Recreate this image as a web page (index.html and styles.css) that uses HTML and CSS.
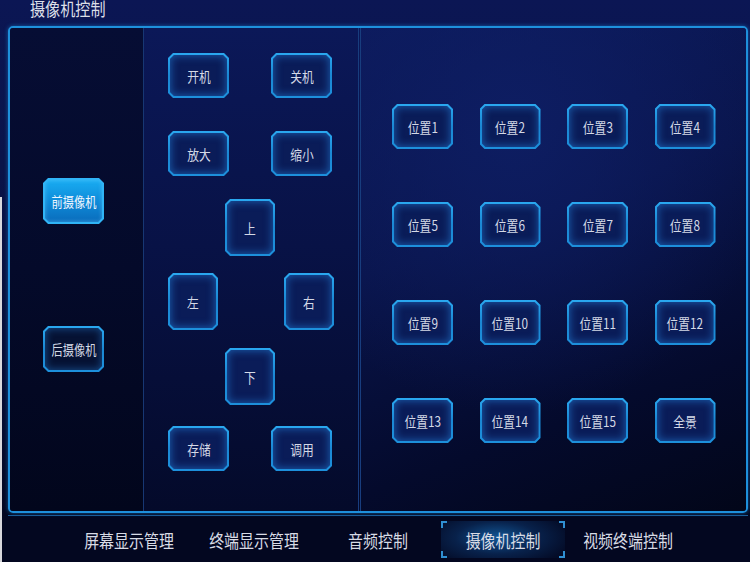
FILE: index.html
```html
<!DOCTYPE html>
<html lang="zh-CN">
<head>
<meta charset="utf-8">
<title>摄像机控制</title>
<link rel="stylesheet" href="styles.css">
</head>
<body>
<div class="page">
  <div class="header"><span class="title">摄像机控制</span></div>
  <div class="frame">
    <div class="col col1">
      <div class="btn cam active"><div class="in"><span class="t">前摄像机</span></div></div>
      <div class="btn cam back"><div class="in"><span class="t">后摄像机</span></div></div>
    </div>
    <div class="col col2">
      <div class="row r1">
        <div class="btn wide"><div class="in"><span class="t">开机</span></div></div>
        <div class="btn wide"><div class="in"><span class="t">关机</span></div></div>
      </div>
      <div class="row r2">
        <div class="btn wide"><div class="in"><span class="t">放大</span></div></div>
        <div class="btn wide"><div class="in"><span class="t">缩小</span></div></div>
      </div>
      <div class="row r3">
        <div class="btn dir"><div class="in"><span class="t">上</span></div></div>
      </div>
      <div class="row r4">
        <div class="btn dir"><div class="in"><span class="t">左</span></div></div>
        <div class="btn dir"><div class="in"><span class="t">右</span></div></div>
      </div>
      <div class="row r5">
        <div class="btn dir"><div class="in"><span class="t">下</span></div></div>
      </div>
      <div class="row r6">
        <div class="btn wide"><div class="in"><span class="t">存储</span></div></div>
        <div class="btn wide"><div class="in"><span class="t">调用</span></div></div>
      </div>
    </div>
    <div class="col col3">
      <div class="grid">
        <div class="btn pos"><div class="in"><span class="t">位置1</span></div></div>
        <div class="btn pos"><div class="in"><span class="t">位置2</span></div></div>
        <div class="btn pos"><div class="in"><span class="t">位置3</span></div></div>
        <div class="btn pos"><div class="in"><span class="t">位置4</span></div></div>
        <div class="btn pos"><div class="in"><span class="t">位置5</span></div></div>
        <div class="btn pos"><div class="in"><span class="t">位置6</span></div></div>
        <div class="btn pos"><div class="in"><span class="t">位置7</span></div></div>
        <div class="btn pos"><div class="in"><span class="t">位置8</span></div></div>
        <div class="btn pos"><div class="in"><span class="t">位置9</span></div></div>
        <div class="btn pos"><div class="in"><span class="t">位置10</span></div></div>
        <div class="btn pos"><div class="in"><span class="t">位置11</span></div></div>
        <div class="btn pos"><div class="in"><span class="t">位置12</span></div></div>
        <div class="btn pos"><div class="in"><span class="t">位置13</span></div></div>
        <div class="btn pos"><div class="in"><span class="t">位置14</span></div></div>
        <div class="btn pos"><div class="in"><span class="t">位置15</span></div></div>
        <div class="btn pos"><div class="in"><span class="t">全景</span></div></div>
      </div>
    </div>
  </div>
  <div class="line2"></div>
  <div class="nav">
    <div class="tab"><span class="nt">屏幕显示管理</span></div>
    <div class="tab"><span class="nt">终端显示管理</span></div>
    <div class="tab"><span class="nt">音频控制</span></div>
    <div class="tab current"><span class="nt">摄像机控制</span></div>
    <div class="tab"><span class="nt">视频终端控制</span></div>
  </div>
</div>
</body>
</html>
```
FILE: styles.css
```css
html, body {
  margin: 0;
  padding: 0;
  background: #030720;
}
.page {
  width: 750px;
  height: 562px;
  position: relative;
  overflow: hidden;
  display: flex;
  flex-direction: column;
  font-family: "Noto Sans CJK SC", "Liberation Sans", sans-serif;
  color: #d6dae6;
  background: linear-gradient(180deg, #0b1654 0%, #0a1449 30%, #060d35 70%, #030720 92%, #030720 100%);
}
.page::before {
  content: "";
  position: absolute;
  left: 0;
  top: 197px;
  width: 2px;
  bottom: 0;
  background: #d8d8dc;
}
.header {
  height: 26px;
  padding-left: 30px;
  flex: none;
}
.title {
  display: block;
  width: max-content;
  font-size: 18px;
  line-height: 20px;
  margin-top: -2px;
  transform: scaleX(0.84);
  transform-origin: left center;
  color: #dcdfe8;
}
.frame {
  flex: none;
  margin-left: 8px;
  width: 740px;
  height: 487px;
  box-sizing: border-box;
  border: 2px solid #1e90dc;
  border-radius: 5px;
  box-shadow: 0 0 4px rgba(30, 150, 230, 0.55), inset 0 0 3px rgba(30, 150, 230, 0.35);
  display: grid;
  grid-template-columns: 134px 217px 1fr;
  overflow: hidden;
}
.col {
  box-sizing: border-box;
  height: 100%;
}
.col1 {
  border-right: 1px solid #173773;
  padding: 150px 0 0 33px;
  display: flex;
  flex-direction: column;
  gap: 102px;
  background: linear-gradient(180deg, #060d34 0%, #040a2a 50%, #02061c 100%);
}
.col2 {
  border-right: 3px double #183d7e;
  padding: 25px 0 0 24px;
  background: linear-gradient(180deg, #0b1858 0%, #081246 45%, #040a2a 100%);
}
.col3 {
  padding: 76px 0 0 31px;
  background:
    radial-gradient(ellipse 70% 60% at 40% 20%, rgba(14, 30, 100, 0.9) 0%, rgba(14, 30, 100, 0) 100%),
    linear-gradient(160deg, #0c1a5c 0%, #09144a 40%, #040a2c 75%, #020619 100%);
}
.row {
  display: flex;
}
.r1 { gap: 42px; }
.r2 { gap: 42px; margin-top: 33px; }
.r3 { margin-top: 23px; padding-left: 57px; }
.r4 { margin-top: 17px; gap: 66px; }
.r5 { margin-top: 18px; padding-left: 57px; }
.r6 { margin-top: 21px; gap: 42px; }
.grid {
  display: grid;
  grid-template-columns: repeat(4, 61px);
  grid-auto-rows: 45px;
  column-gap: 26.5px;
  row-gap: 53px;
}

.btn {
  box-sizing: border-box;
  display: flex;
  padding: 2px;
  background: linear-gradient(180deg, #2aa8f0 0%, #1b88d4 50%, #1d90dc 100%);
  clip-path: polygon(5px 0, calc(100% - 5px) 0, 100% 5px, 100% calc(100% - 5px), calc(100% - 5px) 100%, 5px 100%, 0 calc(100% - 5px), 0 5px);
}
.btn .in {
  flex: 1;
  display: flex;
  align-items: center;
  justify-content: center;
  background: #0a1c58;
  box-shadow: inset 0 0 10px rgba(40, 140, 235, 0.65);
  clip-path: polygon(4px 0, calc(100% - 4px) 0, 100% 4px, 100% calc(100% - 4px), calc(100% - 4px) 100%, 4px 100%, 0 calc(100% - 4px), 0 4px);
}
.t {
  display: inline-block;
  font-size: 14px;
  line-height: 16px;
  transform: scaleX(0.84);
  white-space: nowrap;
  color: #d4d9e6;
}
.wide { width: 61px; height: 45px; }
.dir { width: 50px; height: 57px; }
.pos { width: 61px; height: 45px; }
.cam { width: 61px; height: 46px; }
.cam .t { transform: scaleX(0.8); }
.cam.back .in {
  background: #061233;
  box-shadow: inset 0 0 9px rgba(40, 140, 235, 0.55);
}
.cam.active {
  background: #30b4f6;
}
.cam.active .in {
  background: linear-gradient(180deg, #19adf2 0%, #0f8fdc 45%, #0a6cbc 100%);
  box-shadow: inset 0 0 4px rgba(120, 210, 255, 0.5);
}
.cam.active .t { color: #eef6ff; }

.line2 {
  flex: none;
  width: 740px;
  height: 1px;
  margin: 2px 0 0 8px;
  background: #1a5c98;
}
.nav {
  flex: 1;
  display: flex;
  padding: 5px 0 0 67px;
}
.tab {
  flex: none;
  width: 124.6px;
  height: 37px;
  box-sizing: border-box;
  display: flex;
  align-items: center;
  justify-content: center;
}
.nt {
  display: inline-block;
  font-size: 18px;
  line-height: 20px;
  transform: scaleX(0.83);
  white-space: nowrap;
  color: #d8dbe5;
}
.tab.current {
  background:
    linear-gradient(#2f8fd2, #2f8fd2) left top / 2px 7px no-repeat,
    linear-gradient(#2f8fd2, #2f8fd2) left top / 6px 2px no-repeat,
    linear-gradient(#2f8fd2, #2f8fd2) right top / 2px 7px no-repeat,
    linear-gradient(#2f8fd2, #2f8fd2) right top / 6px 2px no-repeat,
    linear-gradient(#2f8fd2, #2f8fd2) left bottom / 2px 7px no-repeat,
    linear-gradient(#2f8fd2, #2f8fd2) left bottom / 6px 2px no-repeat,
    linear-gradient(#2f8fd2, #2f8fd2) right bottom / 2px 7px no-repeat,
    linear-gradient(#2f8fd2, #2f8fd2) right bottom / 6px 2px no-repeat,
    radial-gradient(ellipse 60% 80% at 45% 45%, rgba(20, 100, 170, 0.85) 0%, rgba(12, 55, 110, 0.55) 55%, rgba(6, 25, 60, 0.3) 100%);
}
```
